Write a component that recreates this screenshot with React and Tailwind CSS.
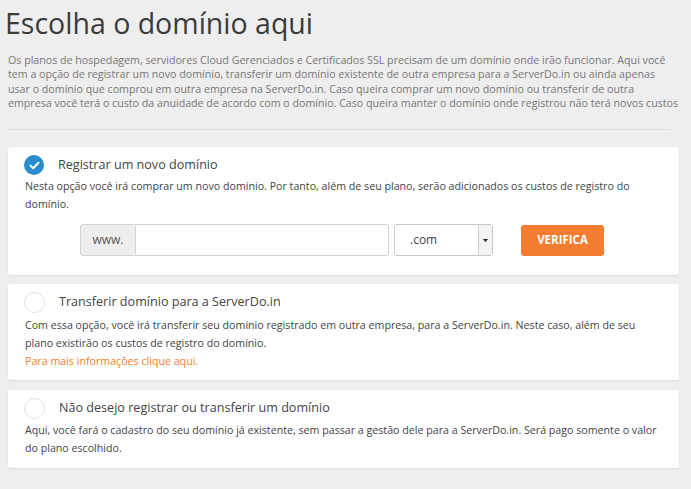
import React from "react";

function CheckCircle({ checked }) {
  if (checked) {
    return (
      <span className="flex h-[20px] w-[20px] shrink-0 items-center justify-center rounded-full bg-[#2a8bd1]">
        <svg width="11" height="9" viewBox="0 0 11 9" fill="none">
          <path d="M1.5 4.6 L4.2 7.2 L9.5 1.8" stroke="#fff" strokeWidth="2" strokeLinecap="round" strokeLinejoin="round" />
        </svg>
      </span>
    );
  }
  return <span className="h-[21px] w-[21px] shrink-0 rounded-full border border-[#e0e0e0] bg-white" />;
}

function Card({ checked, title, children, className = "" }) {
  return (
    <div className={`rounded-[3px] bg-white pl-[16px] pr-[12px] pt-[8px] shadow-[0_1px_2px_rgba(0,0,0,0.08)] ${className}`}>
      <div className="flex h-[20px] items-center">
        <CheckCircle checked={checked} />
        <span className="ml-[14px] text-[12.6px] leading-[20px] text-[#444]">{title}</span>
      </div>
      <div className="mt-[2px] pl-[1px] text-[10.66px] leading-[18px] text-[#444]">{children}</div>
    </div>
  );
}

export default function App() {
  return (
    <div className="min-h-[489px] w-full bg-[#eeeeee] px-[8px] pt-[5px] pb-4 font-['Open_Sans',sans-serif]">
      <h1 className="-ml-[3px] text-[28.5px] leading-[36px] font-normal text-[#3b3b3b]">Escolha o domínio aqui</h1>
      <p className="mt-[12px] text-[10.66px] leading-[14.3px] text-[#777]">
        Os planos de hospedagem, servidores Cloud Gerenciados e Certificados SSL precisam de um domínio onde irão funcionar. Aqui você
        <br />
        tem a opção de registrar um novo domínio, transferir um domínio existente de outra empresa para a ServerDo.in ou ainda apenas
        <br />
        usar o domínio que comprou em outra empresa na ServerDo.in. Caso queira comprar um novo domínio ou transferir de outra
        <br />
        empresa você terá o custo da anuidade de acordo com o domínio. Caso queira manter o domínio onde registrou não terá novos custos
      </p>
      <div className="mt-[19px] mr-[12px] h-px bg-[#dddddd]" />

      <div className="mt-[17px] mr-[4px] flex flex-col gap-[9px]">
        <Card checked title="Registrar um novo domínio" className="pb-[19px]">
          <p>
            Nesta opção você irá comprar um novo domínio. Por tanto, além de seu plano, serão adicionados os custos de registro do
            <br />
            domínio.
          </p>
          <div className="mt-[11px] ml-[55px] flex items-center">
            <div className="flex h-[32px] w-[56px] items-center justify-center rounded-l-[3px] border border-[#d4d4d4] bg-[#eeeeee] text-[12px] text-[#555]">
              www.
            </div>
            <div className="h-[32px] w-[253px] rounded-r-[3px] border border-l-0 border-[#d4d4d4] bg-white" />
            <div className="ml-[5px] flex h-[32px] w-[99px] items-stretch rounded-[3px] border border-[#c8c8c8] bg-white">
              <span className="flex flex-1 items-center pl-[15px] text-[12px] text-[#444]">.com</span>
              <span className="flex w-[14px] items-center justify-center border-l border-[#d0d0d0] bg-[#f3f3f3]">
                <svg width="5" height="3" viewBox="0 0 5 3">
                  <path d="M0 0 L5 0 L2.5 3 Z" fill="#222" />
                </svg>
              </span>
            </div>
            <button className="ml-[28px] flex h-[31px] w-[83px] items-center justify-center rounded-[3px] bg-[#f47d30] text-[11.5px] font-bold text-white">
              VERIFICA
            </button>
          </div>
        </Card>

        <Card title="Transferir domínio para a ServerDo.in" className="pb-[10px]">
          <div className="pt-[2px]">
            <p>
              Com essa opção, você irá transferir seu domínio registrado em outra empresa, para a ServerDo.in. Neste caso, além de seu
              <br />
              plano existirão os custos de registro do domínio.
            </p>
            <p className="text-[#f47d30]">Para mais informações clique aqui.</p>
          </div>
        </Card>

        <Card title="Não desejo registrar ou transferir um domínio" className="mt-[1px] pb-[11px]">
          <p className="pt-[1px]">
            Aqui, você fará o cadastro do seu domínio já existente, sem passar a gestão dele para a ServerDo.in. Será pago somente o valor
            <br />
            do plano escolhido.
          </p>
        </Card>
      </div>
    </div>
  );
}
